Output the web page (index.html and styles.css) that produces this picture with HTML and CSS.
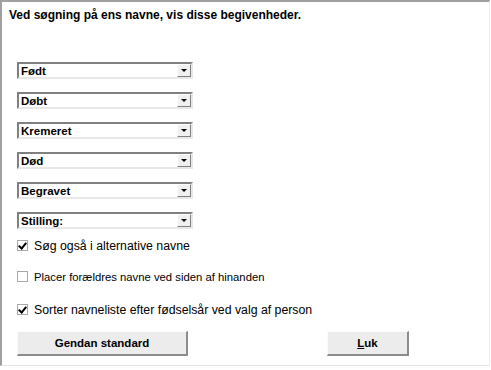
FILE: index.html
```html
<!DOCTYPE html>
<html lang="da">
<head>
    <meta charset="UTF-8">
    <title>Navnesøgning</title>
    <link rel="stylesheet" href="styles.css">
</head>
<body>
    <div class="dialog">
        <p class="heading">Ved søgning på ens navne, vis disse begivenheder.</p>
        <div class="combos">
            <div class="combo"><span>Født</span><i class="drop"></i></div>
            <div class="combo"><span>Døbt</span><i class="drop"></i></div>
            <div class="combo"><span>Kremeret</span><i class="drop"></i></div>
            <div class="combo"><span>Død</span><i class="drop"></i></div>
            <div class="combo"><span>Begravet</span><i class="drop"></i></div>
            <div class="combo"><span>Stilling:</span><i class="drop"></i></div>
        </div>
        <div class="checks">
            <label class="check big"><span class="box on"></span>Søg også i alternative navne</label>
            <label class="check small"><span class="box"></span>Placer forældres navne ved siden af hinanden</label>
            <label class="check big"><span class="box on"></span>Sorter navneliste efter fødselsår ved valg af person</label>
        </div>
        <div class="buttons">
            <button class="btn wide">Gendan standard</button>
            <button class="btn narrow"><u>L</u>uk</button>
        </div>
    </div>
</body>
</html>
```

FILE: styles.css
```css
body {
    margin: 0;
    background: #ffffff;
    font-family: "Liberation Sans", Arial, sans-serif;
    color: #000;
}
.dialog {
    width: 487px;
    height: 363px;
    border-top: 2px solid #a0a0a0;
    border-left: 2px solid #a0a0a0;
    border-bottom: 1px solid #e4e4e4;
    border-right: 1px solid #ececec;
    background: #fff;
}
.heading {
    margin: 0;
    padding: 7px 0 0 7px;
    font-size: 12px;
    font-weight: bold;
    line-height: 13px;
}
.combos {
    display: flex;
    flex-direction: column;
    gap: 13px;
    padding: 40px 0 0 15px;
}
.combo {
    width: 172px;
    height: 13px;
    display: flex;
    align-items: center;
    justify-content: space-between;
    border-top: 2px solid #808080;
    border-left: 2px solid #808080;
    border-bottom: 2px solid #e8e8e8;
    border-right: 2px solid #e8e8e8;
    background: #fff;
}
.combo span {
    font-size: 11.5px;
    font-weight: bold;
    padding-left: 2px;
}
.drop {
    width: 14px;
    height: 13px;
    box-sizing: border-box;
    background: #f0f0f0;
    border-right: 1px solid #808080;
    border-bottom: 1px solid #808080;
    border-top: 1px solid #fff;
    border-left: 1px solid #fff;
    position: relative;
}
.drop::after {
    content: "";
    position: absolute;
    left: 3px;
    top: 4px;
    border-left: 3px solid transparent;
    border-right: 3px solid transparent;
    border-top: 3px solid #000;
}
.checks {
    display: flex;
    flex-direction: column;
    padding: 1px 0 0 15px;
}
.check {
    display: flex;
    align-items: center;
    gap: 6px;
    height: 31px;
}
.check:last-child {
    height: 33px;
    padding-top: 2px;
    box-sizing: border-box;
}
.check.big {
    font-size: 12.3px;
}
.check.small {
    font-size: 11.3px;
}
.box {
    width: 9px;
    height: 9px;
    border: 1px solid #a8a8a8;
    background: #fff;
    position: relative;
}
.box.on::after {
    content: "";
    position: absolute;
    left: 2px;
    top: 0px;
    width: 3px;
    height: 6px;
    border-right: 2px solid #000;
    border-bottom: 2px solid #000;
    transform: rotate(40deg);
}
.buttons {
    display: flex;
    gap: 139px;
    padding: 6px 0 0 15px;
}
.btn {
    height: 25px;
    background: #ececec;
    border-top: 1px solid #fcfcfc;
    border-left: 1px solid #fcfcfc;
    border-right: 2px solid #8c8c8c;
    border-bottom: 2px solid #8c8c8c;
    font-family: "Liberation Sans", Arial, sans-serif;
    font-size: 11.5px;
    font-weight: bold;
    padding: 0;
}
.btn.wide {
    width: 171px;
}
.btn.narrow {
    width: 82px;
}
```
